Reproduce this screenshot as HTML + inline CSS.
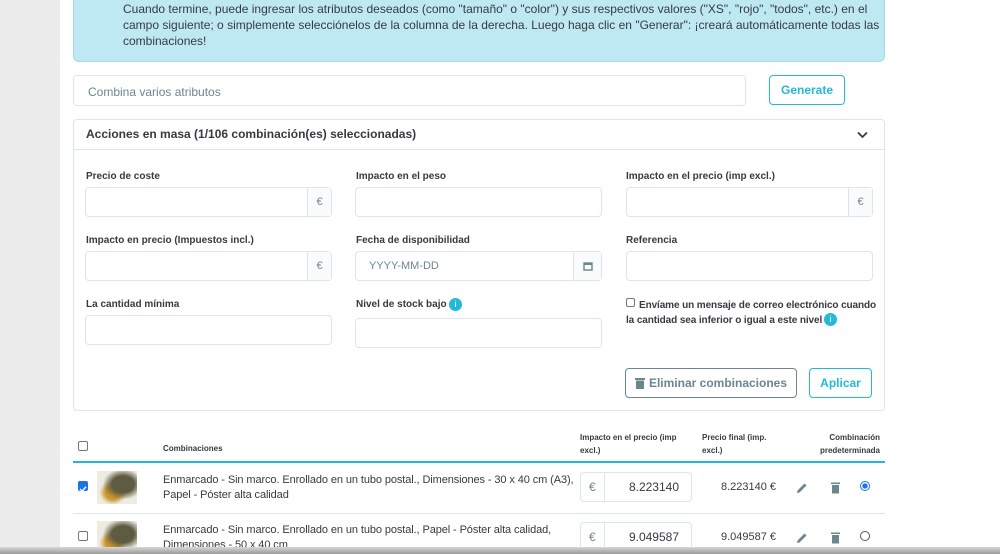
<!DOCTYPE html>
<html><head><meta charset="utf-8"><style>
*{box-sizing:border-box;margin:0;padding:0}
body{width:1000px;height:554px;overflow:hidden;background:#fff;font-family:"Liberation Sans",sans-serif;color:#363a41;position:relative}
.abs{position:absolute}
.strip{left:0;top:0;width:60px;height:554px;background:#ececec}
.alert{left:73px;top:-10px;width:812px;height:72px;background:#bee9f3;border:1px solid #a4dbe8;border-radius:6px}
.alert p{position:absolute;left:49px;top:10px;width:740px;font-size:12px;line-height:16px;color:#363a41;white-space:nowrap}
.inp{border:1px solid #dbe6e9;border-radius:4px;background:#fff}
.lbl{font-size:10px;font-weight:bold;color:#363a41}
.addon{position:absolute;right:0;top:0;bottom:0;width:24px;border-left:1px solid #dbe6e9;background:#fafbfc;color:#6c868e;font-size:11px;text-align:center;line-height:28px}
.btn{border:1px solid #25b9d7;border-radius:4px;color:#25b9d7;font-size:12px;font-weight:bold;text-align:center;background:#fff}
.th{font-size:8px;font-weight:bold;line-height:13px}
.cb{width:10px;height:10px;border:1px solid #777;border-radius:2px;background:#fff}
.row{font-size:11px;line-height:15px;color:#363a41;white-space:nowrap}
.thumb{width:40px;height:33px;background:radial-gradient(ellipse at 65% 40%,#5e5b42 30%,transparent 55%),radial-gradient(ellipse at 40% 65%,#c9952c 22%,transparent 40%),#eeebe1}
</style></head><body>
<div class="abs strip"></div>
<div class="abs alert"><p>Cuando termine, puede ingresar los atributos deseados (como "tamaño" o "color") y sus respectivos valores ("XS", "rojo", "todos", etc.) en el<br>campo siguiente; o simplemente selecciónelos de la columna de la derecha. Luego haga clic en "Generar": ¡creará automáticamente todas las<br>combinaciones!</p></div>
<div class="abs inp" style="left:73px;top:75px;width:673px;height:31px;font-size:12px;color:#6c868e;padding:9px 14px">Combina varios atributos</div>
<div class="abs btn" style="left:769px;top:75px;width:76px;height:30px;line-height:28px">Generate</div>

<div class="abs" style="left:73px;top:119px;width:812px;height:292px;border:1px solid #dbe6e9;border-radius:4px"></div>
<div class="abs" style="left:74px;top:149px;width:810px;height:1px;background:#dbe6e9"></div>
<div class="abs" style="left:86px;top:127px;font-size:12px;font-weight:bold">Acciones en masa (1/106 combinación(es) seleccionadas)</div>
<svg class="abs" style="left:857px;top:131px" width="11" height="8"><path d="M1 1.5L5.5 6L10 1.5" stroke="#363a41" stroke-width="1.8" fill="none"/></svg>

<div class="abs lbl" style="left:86px;top:171px">Precio de coste</div>
<div class="abs inp" style="left:85px;top:187px;width:247px;height:30px"><div class="addon">€</div></div>
<div class="abs lbl" style="left:356px;top:171px">Impacto en el peso</div>
<div class="abs inp" style="left:355px;top:187px;width:247px;height:30px"></div>
<div class="abs lbl" style="left:626px;top:171px">Impacto en el precio (imp excl.)</div>
<div class="abs inp" style="left:626px;top:187px;width:247px;height:30px"><div class="addon">€</div></div>

<div class="abs lbl" style="left:86px;top:235px">Impacto en precio (Impuestos incl.)</div>
<div class="abs inp" style="left:85px;top:251px;width:247px;height:30px"><div class="addon">€</div></div>
<div class="abs lbl" style="left:356px;top:235px">Fecha de disponibilidad</div>
<div class="abs inp" style="left:355px;top:251px;width:247px;height:30px;font-size:11px;color:#6c868e;padding:8px 13px">YYYY-MM-DD<div class="addon" style="width:28px"><svg width="10" height="10" style="margin-top:9px"><rect x="1" y="2" width="8" height="7" fill="none" stroke="#6c868e" stroke-width="1.4"/><rect x="1" y="2" width="8" height="2" fill="#6c868e"/></svg></div></div>
<div class="abs lbl" style="left:626px;top:235px">Referencia</div>
<div class="abs inp" style="left:626px;top:251px;width:247px;height:30px"></div>

<div class="abs lbl" style="left:86px;top:299px">La cantidad mínima</div>
<div class="abs inp" style="left:85px;top:315px;width:247px;height:30px"></div>
<div class="abs lbl" style="left:356px;top:299px">Nivel de stock bajo</div>
<div class="abs" style="left:449px;top:298px;width:13px;height:13px;border-radius:50%;background:#25b9d7;color:#fff;font-size:9px;text-align:center;line-height:13px">i</div>
<div class="abs inp" style="left:355px;top:318px;width:247px;height:30px"></div>
<div class="abs cb" style="left:626px;top:298px;width:9px;height:9px"></div>
<div class="abs lbl" style="left:639px;top:298px;line-height:15px;white-space:nowrap;letter-spacing:-0.1px">Envíame un mensaje de correo electrónico cuando</div>
<div class="abs lbl" style="left:626px;top:313px;line-height:15px;white-space:nowrap;letter-spacing:-0.1px">la cantidad sea inferior o igual a este nivel</div>
<div class="abs" style="left:824px;top:313px;width:13px;height:13px;border-radius:50%;background:#25b9d7;color:#fff;font-size:9px;text-align:center;line-height:13px">i</div>

<div class="abs btn" style="left:625px;top:368px;width:172px;height:30px;line-height:28px;border-color:#6c868e;color:#6c868e;font-size:12px"><svg width="10" height="12" style="vertical-align:-2px;margin-right:4px"><rect x="0" y="1" width="10" height="2" fill="#6c868e"/><rect x="1" y="3.5" width="8" height="8.5" fill="#6c868e"/></svg>Eliminar combinaciones</div>
<div class="abs btn" style="left:809px;top:368px;width:63px;height:30px;line-height:28px">Aplicar</div>

<div class="abs cb" style="left:78px;top:441px"></div>
<div class="abs th" style="left:163px;top:442px">Combinaciones</div>
<div class="abs th" style="left:580px;top:431px;width:110px">Impacto en el precio (imp excl.)</div>
<div class="abs th" style="left:702px;top:431px;width:80px">Precio final (imp. excl.)</div>
<div class="abs th" style="left:800px;top:431px;width:80px;text-align:right">Combinación predeterminada</div>
<div class="abs" style="left:73px;top:461px;width:812px;height:2px;background:#25b9d7"></div>

<div class="abs" style="left:78px;top:481px;width:10px;height:10px;border-radius:2px;background:#1a73e8"><svg width="10" height="10"><path d="M2 5L4.2 7.2L8 2.8" stroke="#fff" stroke-width="1.5" fill="none"/></svg></div>
<div class="abs thumb" style="left:97px;top:471px"></div>
<div class="abs row" style="left:163px;top:473px;letter-spacing:-0.1px">Enmarcado - Sin marco. Enrollado en un tubo postal., Dimensiones - 30 x 40 cm (A3),<br>Papel - Póster alta calidad</div>
<div class="abs inp" style="left:580px;top:472px;width:112px;height:30px;font-size:12px"><span style="position:absolute;left:8px;top:7px;color:#6c868e">€</span><div style="position:absolute;left:23px;top:0;bottom:0;width:1px;background:#dbe6e9"></div><span style="position:absolute;right:12px;top:7px">8.223140</span></div>
<div class="abs row" style="left:721px;top:480px">8.223140 €</div>
<svg class="abs" style="left:796px;top:482px" width="12" height="12"><path d="M1 11L1.5 8.5L8.5 1.5L10.5 3.5L3.5 10.5Z" fill="#6c868e"/></svg>
<svg class="abs" style="left:831px;top:482px" width="9" height="12"><rect x="0" y="0.5" width="9" height="1.5" fill="#6c868e"/><rect x="1" y="3" width="7" height="8.5" fill="#6c868e"/></svg>
<div class="abs" style="left:860px;top:481px;width:10px;height:10px;border-radius:50%;border:1px solid #1a73e8;background:radial-gradient(#1a73e8 45%,#fff 50%)"></div>
<div class="abs" style="left:73px;top:513px;width:812px;height:1px;background:#dbe6e9"></div>

<div class="abs cb" style="left:78px;top:531px"></div>
<div class="abs thumb" style="left:97px;top:521px"></div>
<div class="abs row" style="left:163px;top:523px;letter-spacing:-0.1px">Enmarcado - Sin marco. Enrollado en un tubo postal., Papel - Póster alta calidad,<br>Dimensiones - 50 x 40 cm</div>
<div class="abs inp" style="left:580px;top:522px;width:112px;height:30px;font-size:12px"><span style="position:absolute;left:8px;top:7px;color:#6c868e">€</span><div style="position:absolute;left:23px;top:0;bottom:0;width:1px;background:#dbe6e9"></div><span style="position:absolute;right:12px;top:7px">9.049587</span></div>
<div class="abs row" style="left:721px;top:530px">9.049587 €</div>
<svg class="abs" style="left:796px;top:532px" width="12" height="12"><path d="M1 11L1.5 8.5L8.5 1.5L10.5 3.5L3.5 10.5Z" fill="#6c868e"/></svg>
<svg class="abs" style="left:831px;top:532px" width="9" height="12"><rect x="0" y="0.5" width="9" height="1.5" fill="#6c868e"/><rect x="1" y="3" width="7" height="8.5" fill="#6c868e"/></svg>
<div class="abs" style="left:860px;top:531px;width:10px;height:10px;border-radius:50%;border:1px solid #555"></div>

<div class="abs" style="left:0;top:547px;width:1000px;height:7px;background:linear-gradient(#d8d8d8,#9a9a9a)"></div>
</body></html>
